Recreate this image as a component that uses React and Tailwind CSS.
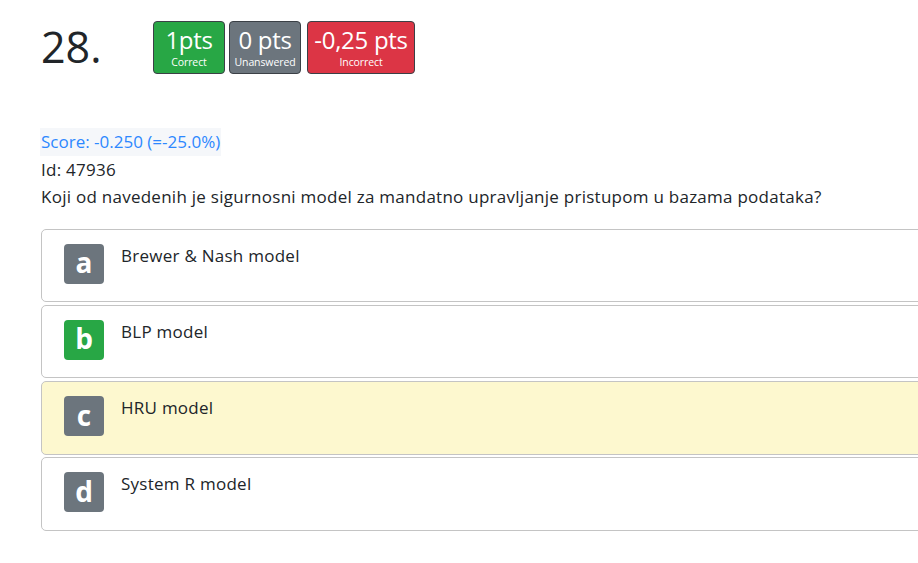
const FONT = { fontFamily: "'Open Sans', 'Noto Sans', sans-serif" };

function Badge({ value, label, color, width }) {
  return (
    <div
      className={`flex h-[53px] flex-col items-center rounded-[4px] border border-[#3b4046] pt-[5px] text-white ${width} ${color}`}
    >
      <div className="whitespace-nowrap text-[24px] leading-[25px] tracking-[-0.3px]">{value}</div>
      <div className="mt-[4px] whitespace-nowrap text-[10.5px] font-medium leading-[13px] tracking-[-0.1px]">{label}</div>
    </div>
  );
}

function Option({ letter, text, boxColor, bg }) {
  return (
    <div
      className={`flex h-[73.6px] items-start rounded-[5px] border border-[#c4c4c4] pl-[22px] pt-[14px] ${bg}`}
    >
      <div
        className={`flex h-[40px] w-[40px] shrink-0 items-center justify-center rounded-[4px] text-[28px] font-bold leading-none text-white ${boxColor}`}
      >
        <span className="-mt-[3px]">{letter}</span>
      </div>
      <div className="-mt-[1px] ml-[17px] text-[17px] leading-[26.5px] tracking-[0.26px] text-[#212529]">
        {text}
      </div>
    </div>
  );
}

export default function App() {
  return (
    <div className="w-full overflow-hidden bg-white" style={FONT}>
      <div className="w-[1100px] pl-[41px] pb-[32px] pt-[21px] text-[#212529]">
        <div className="flex items-start">
          <div className="mt-[4px] w-[112px] text-[43px] leading-[43px]">28.</div>
          <div className="flex items-start">
            <Badge value="1pts" label="Correct" color="bg-[#28a745]" width="w-[72px]" />
            <div className="ml-[4px]">
              <Badge value="0 pts" label="Unanswered" color="bg-[#6c757d]" width="w-[72px]" />
            </div>
            <div className="ml-[6px]">
              <Badge value="-0,25 pts" label="Incorrect" color="bg-[#dc3545]" width="w-[108px]" />
            </div>
          </div>
        </div>

        <div className="mt-[54px] text-[17px] leading-[27.5px] tracking-[0.26px]">
          <div className="-ml-[1px]">
            <span className="inline-block bg-[#f5f7fa] pl-[1px] pr-[1px] tracking-[0px] text-[#2d88ff]">
              Score: -0.250 (=-25.0%)
            </span>
          </div>
          <div>Id: 47936</div>
          <div>Koji od navedenih je sigurnosni model za mandatno upravljanje pristupom u bazama podataka?</div>
        </div>

        <div className="mt-[18px] flex flex-col gap-[2.7px]">
          <Option letter="a" text="Brewer & Nash model" boxColor="bg-[#6c757d]" bg="bg-white" />
          <Option letter="b" text="BLP model" boxColor="bg-[#28a745]" bg="bg-white" />
          <Option letter="c" text="HRU model" boxColor="bg-[#6c757d]" bg="bg-[#fdf8cf]" />
          <Option letter="d" text="System R model" boxColor="bg-[#6c757d]" bg="bg-white" />
        </div>
      </div>
    </div>
  );
}
